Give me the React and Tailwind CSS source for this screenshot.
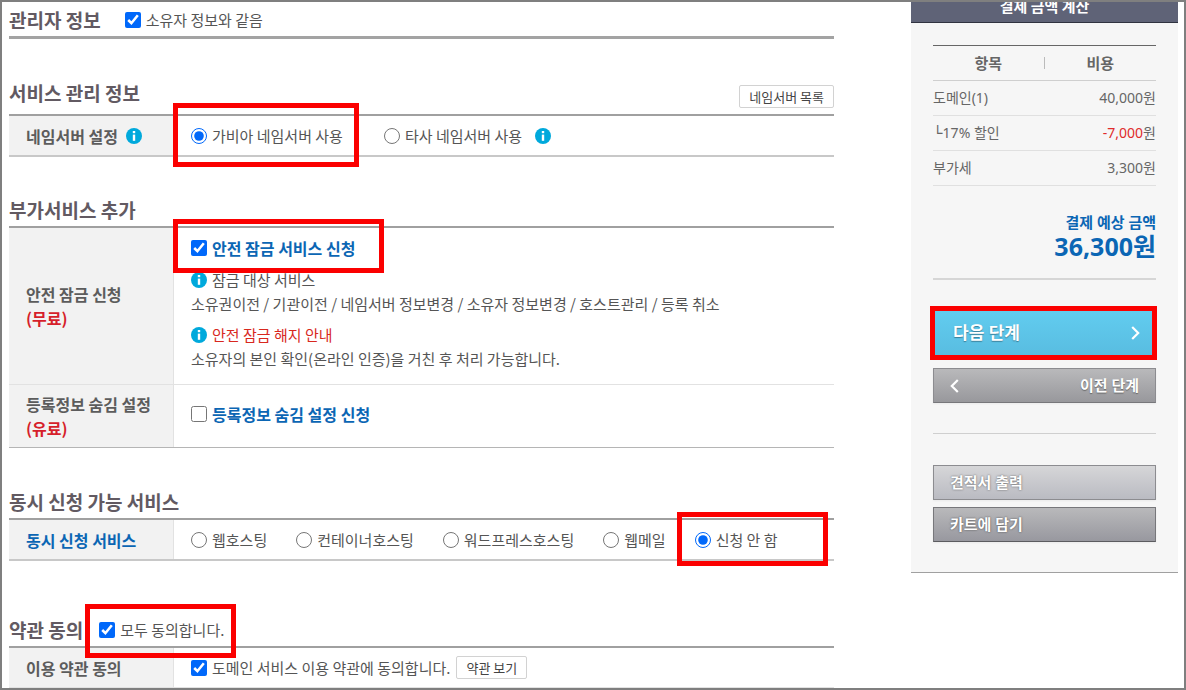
import { useState } from "react";

const HOSTING_OPTIONS = ["웹호스팅", "컨테이너호스팅", "워드프레스호스팅", "웹메일", "신청 안 함"];

// round blue "i" shown next to labels
function InfoIcon() {
  return (
    <svg viewBox="0 0 16 16" className="size-4 shrink-0" aria-hidden="true">
      <circle cx="8" cy="8" r="8" fill="#00a9dc" />
      <rect x="6.8" y="3" width="2.4" height="2.2" fill="#fff" />
      <path d="M6.8 6.6h2.4v6.2H6.8z" fill="#fff" />
    </svg>
  );
}

// red guide box laid over the part the user has to check
function Mark({ className }) {
  return <span className={`pointer-events-none absolute z-10 border-5 border-[#fb0000] ${className}`} />;
}

// checkbox or radio with its label
function Choice({ type = "checkbox", label, strong, children, ...props }) {
  return (
    <label
      className={`relative inline-flex items-center gap-[5px] whitespace-nowrap leading-6 ${
        strong ? "text-[16px] font-bold text-[#0b66b4]" : "text-[15px]"
      }`}
    >
      <input type={type} className="size-4 shrink-0 accent-[#0068fa]" {...props} />
      {label}
      {children}
    </label>
  );
}

function Heading({ children }) {
  return <h2 className="text-[19px] leading-7 font-bold text-[#625a62]">{children}</h2>;
}

function FormTable({ className, children }) {
  return (
    <table className={`w-full border-separate border-spacing-0 border-t-2 border-t-[#a0a0a0] ${className}`}>
      <tbody>{children}</tbody>
    </table>
  );
}

function Row({ head, divider, className = "h-[39px]", children }) {
  const line = divider ? "border-b border-b-[#e2e2e2]" : "";
  return (
    <tr>
      <th
        scope="row"
        className={`w-[165px] border-r border-r-[#e2e2e2] bg-[#f2f2f2] p-0 pl-[17px] text-left text-[16px] leading-6 font-bold whitespace-nowrap text-[#5c5c5c] ${line}`}
      >
        {head}
      </th>
      <td className={`p-0 pl-[17px] ${line} ${className}`}>{children}</td>
    </tr>
  );
}

function SmallButton({ className = "", children }) {
  return (
    <button
      type="button"
      className={`h-[23px] rounded-xs border border-[#d2d2d2] bg-white px-[9px] text-[13px] leading-5 text-[#444] ${className}`}
    >
      {children}
    </button>
  );
}

function PaymentSummary() {
  return (
    <aside className="-mt-[13px] w-[267px] shrink-0 self-start border-b border-[#a0a0a0] bg-[#f6f6f6]">
      <h2 className="h-[34px] border-b border-[#303340] bg-[#5f6377] text-center text-[15px] leading-[34px] font-bold text-white">
        결제 금액 계산
      </h2>
      <div className="px-[22px] pt-[22px] pb-[30px] font-['Noto_Sans','Noto_Sans_CJK_KR',sans-serif] text-[#666]">
        <table className="w-full border-separate border-spacing-0 border-t border-t-[#666] text-[14px] leading-[34px]">
          <thead className="text-[15px]">
            <tr>
              <th className="w-1/2 border-b border-[#cfcfcf] p-0">
                <div className="flex items-center">
                  <span className="flex-1">항목</span>
                  <span className="h-3 w-px bg-[#bbb]" />
                </div>
              </th>
              <th className="w-1/2 border-b border-[#cfcfcf] p-0">비용</th>
            </tr>
          </thead>
          <tbody>
            <tr>
              <td className="border-b border-[#e0e0e0] p-0">도메인(1)</td>
              <td className="border-b border-[#e0e0e0] p-0 text-right">40,000원</td>
            </tr>
            <tr>
              <td className="border-b border-[#e0e0e0] p-0">
                <span className="font-['Liberation_Mono',monospace] text-[16px] leading-none">└</span>17% 할인
              </td>
              <td className="border-b border-[#e0e0e0] p-0 text-right">
                <span className="text-[#e02b2b]">-7,000</span>원
              </td>
            </tr>
            <tr>
              <td className="border-b border-[#e0e0e0] p-0">부가세</td>
              <td className="border-b border-[#e0e0e0] p-0 text-right">3,300원</td>
            </tr>
          </tbody>
        </table>

        <div className="mt-[26px] border-b-2 border-[#d6d6d6] pb-[18px] text-right font-bold text-[#0b66b4]">
          <p className="text-[15px] leading-5">결제 예상 금액</p>
          <p className="text-[25px] leading-7">36,300원</p>
        </div>

        <div className="relative mt-[29px]">
          <button
            type="button"
            className="flex h-12 w-full items-center justify-between bg-linear-to-b from-[#62cdf0] to-[#58bce0] pr-4 pl-5 text-[17px] font-bold text-white text-shadow-[0_1px_1px_#3b7f98]"
          >
            다음 단계
            <svg viewBox="0 0 9 14" className="h-[14px] w-[9px]" fill="none" stroke="#fff" strokeWidth="2.2">
              <path d="M1.2 1 7.2 7l-6 6" />
            </svg>
          </button>
          <Mark className="-top-[3px] -left-[3px] h-[54px] w-[227px]" />
        </div>
        <button
          type="button"
          className="mt-[11px] flex h-[35px] w-full items-center justify-between border border-[#8c8c90] border-b-[#77777b] bg-linear-to-b from-[#b9b9bb] to-[#98989c] px-4 text-[15px] font-bold text-white shadow-xs text-shadow-[0_1px_1px_#666]"
        >
          <svg viewBox="0 0 9 14" className="h-[14px] w-[9px]" fill="none" stroke="#fff" strokeWidth="2.2">
            <path d="M7.8 1 1.8 7l6 6" />
          </svg>
          이전 단계
        </button>

        <hr className="mt-[30px] border-[#cfcfcf]" />

        <button
          type="button"
          className="mt-[31px] block h-[35px] w-full border border-[#8c8c90] bg-linear-to-b from-[#d6d6d8] to-[#babbc2] pl-4 text-left text-[15px] font-bold text-white shadow-xs text-shadow-[0_0_2px_#555]"
        >
          견적서 출력
        </button>
        <button
          type="button"
          className="mt-[7px] block h-[35px] w-full border border-[#77777b] border-b-[#5c5c60] bg-linear-to-b from-[#b9b9bb] to-[#98989f] pl-4 text-left text-[15px] font-bold text-white shadow-xs text-shadow-[0_0_2px_#444]"
        >
          카트에 담기
        </button>
      </div>
    </aside>
  );
}

export default function App() {
  const [nameServer, setNameServer] = useState("gabia");
  const [hosting, setHosting] = useState("신청 안 함");

  return (
    <div className="flex min-h-screen gap-[77px] overflow-hidden border-2 border-[#7f7f7f] bg-white pr-[6px] pl-[7px] font-['Noto_Sans_CJK_KR',sans-serif] text-[#555]">
      <main className="min-w-0 flex-1">
        {/* 관리자 정보 */}
        <section className="flex items-center gap-6 border-b-3 border-[#a3a3a3] pt-1 pb-[2px]">
          <Heading>관리자 정보</Heading>
          <Choice label="소유자 정보와 같음" defaultChecked />
        </section>

        {/* 서비스 관리 정보 */}
        <section className="mt-10">
          <div className="flex items-start justify-between pb-[6px]">
            <Heading>서비스 관리 정보</Heading>
            <SmallButton className="mt-[6px]">네임서버 목록</SmallButton>
          </div>
          <FormTable className="border-b-2 border-b-[#c8c8c8]">
            <Row
              head={
                <span className="flex items-center gap-2">
                  네임서버 설정 <InfoIcon />
                </span>
              }
            >
              <div className="flex items-center">
                <Choice
                  type="radio"
                  name="ns"
                  label="가비아 네임서버 사용"
                  checked={nameServer === "gabia"}
                  onChange={() => setNameServer("gabia")}
                >
                  <Mark className="-top-[21px] -left-[18px] h-16 w-[186px]" />
                </Choice>
                <span className="mr-[13px] ml-[41px] flex">
                  <Choice
                    type="radio"
                    name="ns"
                    label="타사 네임서버 사용"
                    checked={nameServer === "other"}
                    onChange={() => setNameServer("other")}
                  />
                </span>
                <InfoIcon />
              </div>
            </Row>
          </FormTable>
        </section>

        {/* 부가서비스 추가 */}
        <section className="mt-[39px]">
          <div className="pb-[2px]">
            <Heading>부가서비스 추가</Heading>
          </div>
          <FormTable className="border-b border-b-[#b5b5b5]">
            <Row
              divider
              className="pt-2 pb-[13px] text-[15px] leading-6"
              head={
                <>
                  안전 잠금 신청
                  <br />
                  <span className="text-[#d61f2b]">(무료)</span>
                </>
              }
            >
              <div className="flex">
                <Choice strong label="안전 잠금 서비스 신청" defaultChecked>
                  <Mark className="-top-[17px] -left-[18px] h-[54px] w-[211px]" />
                </Choice>
              </div>
              <p className="mt-2 flex items-center gap-[5px]">
                <InfoIcon /> 잠금 대상 서비스
              </p>
              <p>소유권이전 / 기관이전 / 네임서버 정보변경 / 소유자 정보변경 / 호스트관리 / 등록 취소</p>
              <p className="mt-[7px] flex items-center gap-[5px] text-[#d8281e]">
                <InfoIcon /> 안전 잠금 해지 안내
              </p>
              <p>소유자의 본인 확인(온라인 인증)을 거친 후 처리 가능합니다.</p>
            </Row>
            <Row
              className="h-[62px] pb-1"
              head={
                <>
                  등록정보 숨김 설정
                  <br />
                  <span className="text-[#d61f2b]">(유료)</span>
                </>
              }
            >
              <div className="flex">
                <Choice strong label="등록정보 숨김 설정 신청" />
              </div>
            </Row>
          </FormTable>
        </section>

        {/* 동시 신청 가능 서비스 */}
        <section className="mt-10">
          <div className="pb-[2px]">
            <Heading>동시 신청 가능 서비스</Heading>
          </div>
          <FormTable className="border-b-2 border-b-[#c8c8c8]">
            <Row head={<span className="text-[#0b66b4]">동시 신청 서비스</span>}>
              <div className="flex gap-[29px]">
                {HOSTING_OPTIONS.map((name) => (
                  <Choice
                    key={name}
                    type="radio"
                    name="hosting"
                    label={name}
                    checked={hosting === name}
                    onChange={() => setHosting(name)}
                  >
                    {name === "신청 안 함" && <Mark className="-top-4 -left-[18px] h-[54px] w-[151px]" />}
                  </Choice>
                ))}
              </div>
            </Row>
          </FormTable>
        </section>

        {/* 약관 동의 */}
        <section className="mt-[55px]">
          <div className="flex items-center gap-4 pb-[2px]">
            <Heading>약관 동의</Heading>
            <Choice label="모두 동의합니다." defaultChecked>
              <Mark className="-top-[14px] -left-[14px] h-[54px] w-[151px]" />
            </Choice>
          </div>
          <FormTable className="border-b border-b-[#e2e2e2]">
            <Row head="이용 약관 동의">
              <div className="flex items-center gap-[6px]">
                <Choice label="도메인 서비스 이용 약관에 동의합니다." defaultChecked />
                <SmallButton>약관 보기</SmallButton>
              </div>
            </Row>
          </FormTable>
        </section>
      </main>

      <PaymentSummary />
    </div>
  );
}
